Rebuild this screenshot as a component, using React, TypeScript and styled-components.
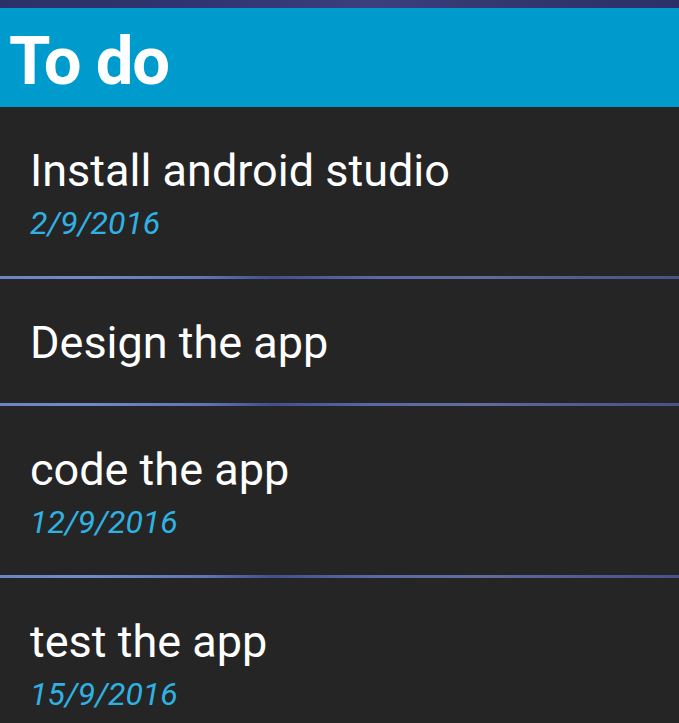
import React from "react";
import styled, { createGlobalStyle } from "styled-components";

const Global = createGlobalStyle`
  html, body { margin: 0; padding: 0; background: #252525; }
  body { font-family: Roboto, "Noto Sans", sans-serif; overflow: hidden; }
`;

const Screen = styled.div`
  width: 679px;
  height: 723px;
  display: flex;
  flex-direction: column;
  background: #252525;
  overflow: hidden;
`;

const StatusStrip = styled.div`
  height: 8px;
  flex: none;
  background: linear-gradient(90deg, #2c306a 0%, #2f3570 30%, #3a407c 55%, #323771 75%, #2c3068 100%);
`;

const AppBar = styled.header`
  height: 99px;
  flex: none;
  background: #009bcd;
  display: flex;
  align-items: center;
  padding-left: 9px;
`;

const AppTitle = styled.h1`
  margin: 0;
  color: #ffffff;
  font-family: Roboto, sans-serif;
  font-weight: 700;
  font-size: 67px;
  letter-spacing: -1.2px;
  line-height: 1;
  padding-top: 8px;
`;

const List = styled.div`
  display: flex;
  flex-direction: column;
`;

const Item = styled.div`
  display: flex;
  flex-direction: column;
  padding: 37px 30px 34px 30px;
`;

const ItemTitle = styled.div`
  color: #ffffff;
  font-size: 45px;
  line-height: 53px;
  font-weight: 400;
`;

const ItemDate = styled.div`
  margin-top: 8px;
  color: #2fb2e2;
  font-size: 32px;
  line-height: 37px;
  font-style: italic;
`;

const Divider = styled.div`
  height: 3px;
  flex: none;
  background: linear-gradient(90deg, #6b84c4 0%, #6f8ccb 12%, #5f75b8 30%, #44508e 40%, #5a68a6 55%, #636c9c 70%, #545c92 85%, #4b5288 100%);
`;

const todos = [
  { title: "Install android studio", date: "2/9/2016" },
  { title: "Design the app" },
  { title: "code the app", date: "12/9/2016" },
  { title: "test the app", date: "15/9/2016" },
];

export default function App() {
  return (
    <>
      <Global />
      <Screen>
        <StatusStrip />
        <AppBar>
          <AppTitle>To do</AppTitle>
        </AppBar>
        <List>
          {todos.map((t, i) => (
            <React.Fragment key={t.title}>
              {i > 0 && <Divider />}
              <Item>
                <ItemTitle>{t.title}</ItemTitle>
                {t.date && <ItemDate>{t.date}</ItemDate>}
              </Item>
            </React.Fragment>
          ))}
        </List>
      </Screen>
    </>
  );
}
